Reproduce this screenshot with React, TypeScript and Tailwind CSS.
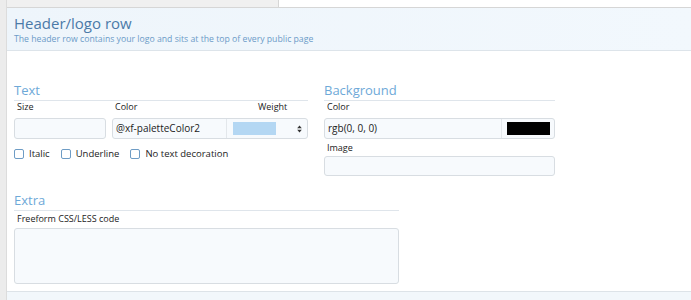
const font = { fontFamily: '"Open Sans", "Noto Sans", sans-serif' };

function Heading({ children }: { children: string }) {
  return (
    <div className="border-b border-[#dfe5eb] pb-[1px] text-[13px] leading-[17px] text-[#6ea9d8]">{children}</div>
  );
}

function Label({ children }: { children: string }) {
  return <div className="pl-[3px] text-[9px] leading-[12px] text-[#222]">{children}</div>;
}

function Check({ label }: { label: string }) {
  return (
    <label className="flex items-center gap-[5px] text-[9.5px] text-[#222]">
      <span className="block h-[10px] w-[10px] rounded-[2px] border border-[#6e9cc5] bg-white" />
      {label}
    </label>
  );
}

function UpDown() {
  return (
    <svg width="5" height="8" viewBox="0 0 5 8" className="text-[#333]">
      <path d="M2.5 0.5 L4.8 3.2 H0.2 Z" fill="currentColor" />
      <path d="M2.5 7.5 L4.8 4.8 H0.2 Z" fill="currentColor" />
    </svg>
  );
}

export default function App() {
  return (
    <div className="flex h-[300px] w-[691px] overflow-hidden bg-white" style={font}>
      <div className="w-[7px] shrink-0 border-r border-[#dcdcdc] bg-[#ececec]" />
      <div className="flex flex-1 flex-col">
        <div className="flex h-[8px] border-b border-[#d6d6d6]">
          <div className="w-[272px] border-r border-[#d6d6d6] bg-[#f0f0f0]" />
          <div className="flex-1 bg-white" />
        </div>
        <div className="h-[43px] border-b border-[#dde4ea] bg-gradient-to-r from-[#eef5fb] to-[#f2f8fd] px-[7px] pt-[5px]">
          <div className="text-[15px] leading-[21px] text-[#4b7aa8]">Header/logo row</div>
          <div className="text-[8.7px] leading-[11px] text-[#6c9bc8]">
            The header row contains your logo and sits at the top of every public page
          </div>
        </div>

        <div className="flex-1 px-[7px] pt-[31px]">
          <div className="flex gap-[16px]">
            <div className="w-[294px]">
              <Heading>Text</Heading>
              <div className="flex text-[9px]">
                <div className="w-[98px]"><Label>Size</Label></div>
                <div className="w-[143px]"><Label>Color</Label></div>
                <div><Label>Weight</Label></div>
              </div>
              <div className="mt-[5px] flex gap-[6px]">
                <div className="h-[21px] w-[92px] rounded-[3px] border border-[#d8dde2] bg-[#f7fafd]" />
                <div className="flex h-[21px] flex-1 rounded-[3px] border border-[#d8dde2] bg-[#f7fafd]">
                  <div className="flex w-[114px] items-center border-r border-[#e3e7eb] pl-[3px] text-[10px] text-[#222]">
                    @xf-paletteColor2
                  </div>
                  <div className="flex w-[54px] items-center justify-center">
                    <div className="h-[13px] w-[43px] bg-[#b4d7f3]" />
                  </div>
                  <div className="flex flex-1 items-center justify-end pr-[5px]">
                    <UpDown />
                  </div>
                </div>
              </div>
              <div className="mt-[8px] flex gap-[11px]">
                <Check label="Italic" />
                <Check label="Underline" />
                <Check label="No text decoration" />
              </div>
            </div>

            <div className="w-[231px]">
              <Heading>Background</Heading>
              <Label>Color</Label>
              <div className="mt-[5px] flex h-[21px] rounded-[3px] border border-[#d8dde2] bg-[#f7fafd]">
                <div className="flex flex-1 items-center border-r border-[#e3e7eb] pl-[3px] text-[10px] text-[#222]">
                  rgb(0, 0, 0)
                </div>
                <div className="flex w-[52px] items-center justify-center">
                  <div className="h-[13px] w-[43px] bg-black" />
                </div>
              </div>
              <div className="mt-[3px]"><Label>Image</Label></div>
              <div className="mt-[2px] h-[20px] rounded-[3px] border border-[#d8dde2] bg-[#f7fafd]" />
            </div>
          </div>

          <div className="mt-[16px] w-[385px]">
            <Heading>Extra</Heading>
            <div className="mt-[2px]"><Label>Freeform CSS/LESS code</Label></div>
            <div className="mt-[3px] h-[56px] rounded-[3px] border border-[#d8dde2] bg-[#f7fafd]" />
          </div>
        </div>

        <div className="h-[9px] border-t border-[#dde3e8] bg-[#f2f7fb]" />
      </div>
    </div>
  );
}
